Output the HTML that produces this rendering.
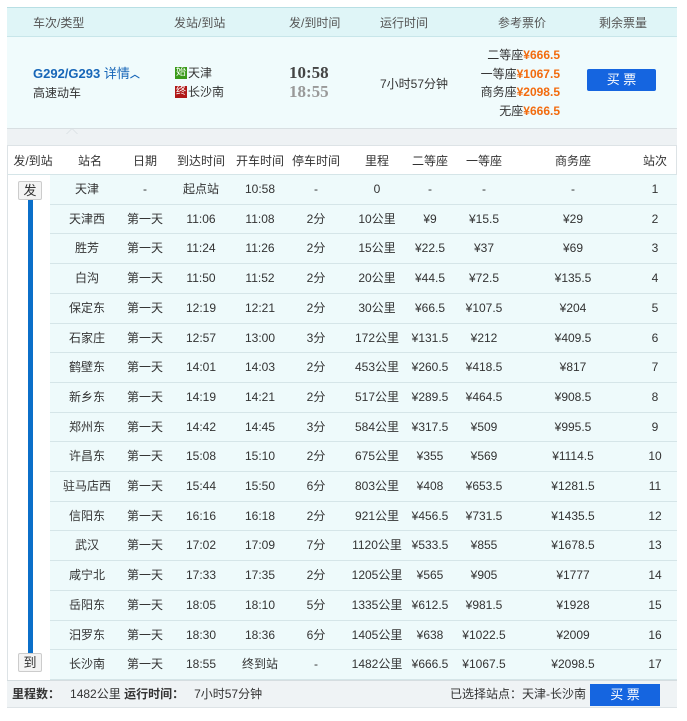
<!DOCTYPE html>
<html><head><meta charset="utf-8"><style>
*{margin:0;padding:0;box-sizing:border-box}
body{width:687px;height:721px;background:#fff;font-family:"Liberation Sans","Noto Sans CJK SC",sans-serif;font-size:12px;color:#333;position:relative;overflow:hidden}
.a{position:absolute;white-space:nowrap}
.c{position:absolute;width:90px;text-align:center;white-space:nowrap;line-height:16px}
.row{position:absolute;left:50px;width:627px;height:30px;background:#eefafb;border-bottom:1px solid #d5e5e8}
.row .c{top:0;line-height:29px;height:29px}
.y{color:#f26b0e;font-weight:bold}
</style></head><body>
<div class="a" style="left:7px;top:7px;width:670px;height:30px;background:#dff5f7;border-top:1px solid #b8dfe4;border-bottom:1px solid #c8e6ea"></div>
<div class="a" style="left:33px;top:14px;color:#555">车次/类型</div>
<div class="a" style="left:174px;top:14px;color:#555">发站/到站</div>
<div class="a" style="left:289px;top:14px;color:#555">发/到时间</div>
<div class="a" style="left:380px;top:14px;color:#555">运行时间</div>
<div class="a" style="left:498px;top:14px;color:#555">参考票价</div>
<div class="a" style="left:599px;top:14px;color:#555">剩余票量</div>
<div class="a" style="left:7px;top:37px;width:670px;height:91px;background:#f0fbfc"></div>
<div class="a" style="left:33px;top:66px;font-weight:bold;color:#1766b8;font-size:13px;line-height:16px">G292/G293 <span style="font-weight:normal">详情</span><span style="font-size:10px">︿</span></div>
<div class="a" style="left:33px;top:85px;line-height:16px">高速动车</div>
<div class="a" style="left:175px;top:67px;width:12px;height:12px;background:#3a9a1a;color:#fff;font-size:10px;line-height:12px;text-align:center">始</div>
<div class="a" style="left:188px;top:65px;line-height:16px">天津</div>
<div class="a" style="left:175px;top:86px;width:12px;height:12px;background:#b01818;color:#fff;font-size:10px;line-height:12px;text-align:center">终</div>
<div class="a" style="left:188px;top:84px;line-height:16px">长沙南</div>
<div class="a" style="left:289px;top:64px;font-family:'Liberation Serif',serif;font-weight:bold;font-size:17px;color:#444;line-height:18px">10:58</div>
<div class="a" style="left:289px;top:83px;font-family:'Liberation Serif',serif;font-weight:bold;font-size:17px;color:#999;line-height:18px">18:55</div>
<div class="a" style="left:380px;top:76px;line-height:16px">7小时57分钟</div>
<div class="a" style="left:440px;top:46px;width:120px;text-align:right;line-height:18.5px">二等座<span class="y">¥666.5</span><br>一等座<span class="y">¥1067.5</span><br>商务座<span class="y">¥2098.5</span><br>无座<span class="y">¥666.5</span></div>
<div class="a" style="left:587px;top:69px;width:69px;height:22px;background:#1565e0;border-radius:2px;color:#fff;text-align:center;line-height:22px;font-size:13px">买 票</div>
<div class="a" style="left:7px;top:128px;width:670px;height:17px;background:#eef2f4;border-top:1px solid #d8dfe2"></div>
<div class="a" style="left:66px;top:122px;width:0;height:0;border:6px solid transparent;border-bottom-color:#d8dfe2"></div>
<div class="a" style="left:67px;top:124px;width:0;height:0;border:5px solid transparent;border-bottom-color:#eef2f4"></div>
<div class="a" style="left:7px;top:145px;width:670px;height:30px;border-top:1px solid #dde3e6;border-bottom:1px solid #d5e5e8;background:#fff"></div>
<div class="a" style="left:7px;top:145px;width:1px;height:563px;background:#dde3e6"></div>
<div class="a" style="left:676px;top:145px;width:1px;height:563px;background:#dde3e6"></div>
<div class="c" style="left:-12px;top:153px">发/到站</div>
<div class="c" style="left:45px;top:153px">站名</div>
<div class="c" style="left:100px;top:153px">日期</div>
<div class="c" style="left:156px;top:153px">到达时间</div>
<div class="c" style="left:215px;top:153px">开车时间</div>
<div class="c" style="left:271px;top:153px">停车时间</div>
<div class="c" style="left:332px;top:153px">里程</div>
<div class="c" style="left:385px;top:153px">二等座</div>
<div class="c" style="left:439px;top:153px">一等座</div>
<div class="c" style="left:528px;top:153px">商务座</div>
<div class="c" style="left:610px;top:153px">站次</div>
<div id="rows"></div>
<div class="a" style="left:28px;top:198px;width:5px;height:455px;background:#0b6fc9"></div>
<div class="a" style="left:18px;top:181px;width:24px;height:19px;background:#f4f4f4;border:1px solid #ccc;border-radius:2px;text-align:center;line-height:17px;font-size:13px">发</div>
<div class="a" style="left:18px;top:653px;width:24px;height:19px;background:#f4f4f4;border:1px solid #ccc;border-radius:2px;text-align:center;line-height:17px;font-size:13px">到</div>
<div class="a" style="left:7px;top:680px;width:670px;height:28px;background:#eff3f5;border-top:1px solid #d5dde0;border-bottom:1px solid #dde3e6"></div>
<div class="a" style="left:12px;top:686px;line-height:16px"><b>里程数：</b>&nbsp;&nbsp;&nbsp;1482公里 <b>运行时间：</b>&nbsp;&nbsp;&nbsp;7小时57分钟</div>
<div class="a" style="left:450px;top:686px;line-height:16px">已选择站点：天津-长沙南</div>
<div class="a" style="left:590px;top:684px;width:70px;height:22px;background:#1565e0;color:#fff;text-align:center;line-height:22px;font-size:13px">买 票</div>
<script>
var d=[["天津","-","起点站","10:58","-","0","-","-","-"],
["天津西","第一天","11:06","11:08","2分","10公里","¥9","¥15.5","¥29"],
["胜芳","第一天","11:24","11:26","2分","15公里","¥22.5","¥37","¥69"],
["白沟","第一天","11:50","11:52","2分","20公里","¥44.5","¥72.5","¥135.5"],
["保定东","第一天","12:19","12:21","2分","30公里","¥66.5","¥107.5","¥204"],
["石家庄","第一天","12:57","13:00","3分","172公里","¥131.5","¥212","¥409.5"],
["鹤壁东","第一天","14:01","14:03","2分","453公里","¥260.5","¥418.5","¥817"],
["新乡东","第一天","14:19","14:21","2分","517公里","¥289.5","¥464.5","¥908.5"],
["郑州东","第一天","14:42","14:45","3分","584公里","¥317.5","¥509","¥995.5"],
["许昌东","第一天","15:08","15:10","2分","675公里","¥355","¥569","¥1114.5"],
["驻马店西","第一天","15:44","15:50","6分","803公里","¥408","¥653.5","¥1281.5"],
["信阳东","第一天","16:16","16:18","2分","921公里","¥456.5","¥731.5","¥1435.5"],
["武汉","第一天","17:02","17:09","7分","1120公里","¥533.5","¥855","¥1678.5"],
["咸宁北","第一天","17:33","17:35","2分","1205公里","¥565","¥905","¥1777"],
["岳阳东","第一天","18:05","18:10","5分","1335公里","¥612.5","¥981.5","¥1928"],
["汨罗东","第一天","18:30","18:36","6分","1405公里","¥638","¥1022.5","¥2009"],
["长沙南","第一天","18:55","终到站","-","1482公里","¥666.5","¥1067.5","¥2098.5"]];
var cx=[87,145,201,260,316,377,430,484,573,655],h="";
d.forEach(function(r,i){var t0=Math.round(175+i*29.7),t1=Math.round(175+(i+1)*29.7);
h+='<div class="row" style="top:'+t0+'px;height:'+(t1-t0)+'px">';
r.concat([String(i+1)]).forEach(function(t,j){h+='<div class="c" style="left:'+(cx[j]-50-45)+'px">'+t+'</div>'});h+='</div>'});
document.getElementById('rows').innerHTML=h;
</script>
</body></html>
